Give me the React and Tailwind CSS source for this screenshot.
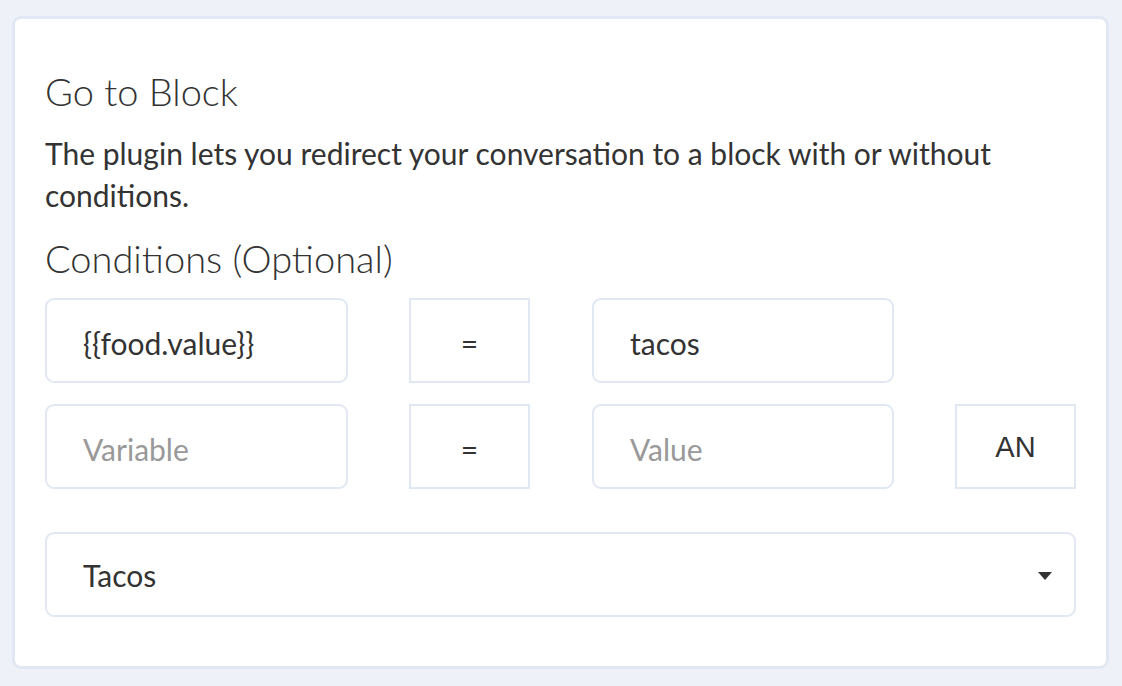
import React from "react";

const boxRounded =
    "h-[85px] rounded-[9px] border-2 border-[#e0e8f3] bg-white flex items-center pl-[36px] pt-[5px] text-[30px]";
const boxSquare =
    "h-[85px] w-[121px] border-2 border-[#e0e8f3] bg-white flex items-center justify-center text-[30px]";

const ConditionRow = ({ variable, value, showJoin }) => (
    <div className="flex items-center">
        <div className={boxRounded + " w-[303px]"}>
            {variable ? (
                <span className="text-[#333]">{variable}</span>
            ) : (
                <span className="text-[#999]">Variable</span>
            )}
        </div>
        <div className={boxSquare + " ml-[61px] pt-[5px]"}>
            <span className="text-[#333]">=</span>
        </div>
        <div className={boxRounded + " w-[302px] ml-[62px]"}>
            {value ? (
                <span className="text-[#333]">{value}</span>
            ) : (
                <span className="text-[#999]">Value</span>
            )}
        </div>
        {showJoin && (
            <div className={boxSquare + " ml-[61px] pt-[2px] overflow-hidden"}>
                <span className="text-[#333] font-['Liberation_Sans',Arial,sans-serif] text-[29px]">AN</span>
            </div>
        )}
    </div>
);

const App = () => {
    return (
        <div className="w-[1122px] h-[686px] bg-[#eef2f8] pt-[16px] pl-[12px] font-['Lato',sans-serif]">
            <div className="w-[1097px] h-[653px] bg-white border-[3px] border-[#e1e8f4] rounded-[9px] pl-[30px] pt-[50px]">
                <h1 className="text-[38px] leading-[1.2] font-light text-[#333]">Go to Block</h1>

                <p className="mt-[17px] text-[30px] leading-[42px] text-[#333] w-[1000px]">
                    The plugin lets you redirect your conversation to a block with or without conditions.
                </p>

                <h2 className="mt-[20px] text-[38px] leading-[1.2] font-light text-[#333]">
                    Conditions (Optional)
                </h2>

                <div className="mt-[17px] flex flex-col gap-[21px]">
                    <ConditionRow variable="{{food.value}}" value="tacos" />
                    <ConditionRow showJoin />
                </div>

                <div className="mt-[43px] w-[1031px] h-[85px] rounded-[9px] border-2 border-[#e0e8f3] flex items-center justify-between pl-[36px] pr-[22px] pt-[2px]">
                    <span className="text-[30px] text-[#333]">Tacos</span>
                    <svg width="14" height="8" viewBox="0 0 14 8">
                        <path d="M0 0 L14 0 L7 8 Z" fill="#333" />
                    </svg>
                </div>
            </div>
        </div>
    );
};

export default App;
